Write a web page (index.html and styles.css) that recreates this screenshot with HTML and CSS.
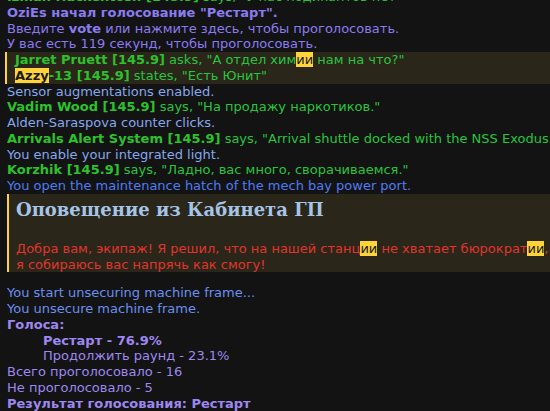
FILE: index.html
```html
<!DOCTYPE html>
<html lang="en">
<head>
    <meta charset="UTF-8">
    <title>Chat</title>
    <link rel="stylesheet" href="styles.css">
</head>
<body>
    <div class="chat">
        <div class="msg"><span class="name">Izman Hackentosh [145.9]</span> <span class="say">says, "У нас подикантов нет"</span></div>
        <div class="msg vote-start"><b>OziEs начал голосование "Рестарт".</b></div>
        <div class="msg vote">Введите <b>vote</b> или нажмите здесь, чтобы проголосовать.</div>
        <div class="msg vote">У вас есть 119 секунд, чтобы проголосовать.</div>

        <div class="mention">
            <div class="msg"><span class="name">Jarret Pruett [145.9]</span> <span class="say">asks, "А отдел хим<mark>ии</mark> нам на что?"</span></div>
            <div class="msg"><span class="name"><mark>Azzy</mark>-13 [145.9]</span> <span class="say">states, "Есть Юнит"</span></div>
        </div>

        <div class="msg notice">Sensor augmentations enabled.</div>
        <div class="msg"><span class="name">Vadim Wood [145.9]</span> <span class="say">says, "На продажу наркотиков."</span></div>
        <div class="msg notice">Alden-Saraspova counter clicks.</div>
        <div class="msg"><span class="name">Arrivals Alert System [145.9]</span> <span class="say">says, "Arrival shuttle docked with the NSS Exodus."</span></div>
        <div class="msg notice">You enable your integrated light.</div>
        <div class="msg"><span class="name">Korzhik [145.9]</span> <span class="say">says, "Ладно, вас много, сворачиваемся."</span></div>
        <div class="msg info">You open the maintenance hatch of the mech bay power port.</div>

        <div class="announce">
            <h2>Оповещение из Кабинета ГП</h2>
            <div class="msg">Добра вам, экипаж! Я решил, что на нашей станц<mark>ии</mark> не хватает бюрократ<mark>ии</mark>, и теперь</div>
            <div class="msg">я собираюсь вас напрячь как смогу!</div>
        </div>

        <div class="msg info-soft">You start unsecuring machine frame...</div>
        <div class="msg info-soft">You unsecure machine frame.</div>
        <div class="msg result"><b>Голоса:</b></div>
        <div class="msg result indent"><b>Рестарт - 76.9%</b></div>
        <div class="msg result indent">Продолжить раунд - 23.1%</div>
        <div class="msg result">Всего проголосовало - 16</div>
        <div class="msg result">Не проголосовало - 5</div>
        <div class="msg result"><b>Результат голосования: Рестарт</b></div>
    </div>
</body>
</html>
```

FILE: styles.css
```css
:root {
    --background: #131313;
    --green: #2cc22c;
    --green-text: #29c43f;
    --purple: #8a7cf0;
    --blue-light: #86a8ee;
    --blue: #4f7cf2;
    --yellow: #ffd43a;
    --box: #2a2619;
}

body {
    margin: 0;
    background-color: var(--background);
    font-family: "DejaVu Sans", Verdana, sans-serif;
    font-size: 13px;
    line-height: 15.75px;
    overflow: hidden;
}

.chat {
    margin-top: -11px;
    padding-left: 7px;
    white-space: nowrap;
}

.name {
    color: var(--green);
    font-weight: bold;
}

.say {
    color: var(--green-text);
}

.vote-start,
.vote {
    color: var(--purple);
}

.notice {
    color: var(--blue-light);
}

.info {
    color: var(--blue);
}

.info-soft {
    color: #6b8ff0;
}

.result {
    color: #9d88f0;
}

.indent {
    padding-left: 36px;
}

mark {
    background: var(--yellow);
    color: #1a1a1a;
}

.mention {
    margin-left: -2px;
    padding-left: 8px;
    border-left: 2px solid var(--yellow);
    background: var(--box);
}

.announce {
    margin: 0 0 13px 0;
    padding: 4px 0 0 7px;
    border-left: 2px solid var(--yellow);
    background: var(--box);
}

.announce h2 {
    margin: 0 0 19px;
    font-family: "DejaVu Serif", Georgia, serif;
    font-size: 18px;
    line-height: 24px;
    color: #a6c4e6;
}

.announce .msg {
    color: #e0352f;
}
```
